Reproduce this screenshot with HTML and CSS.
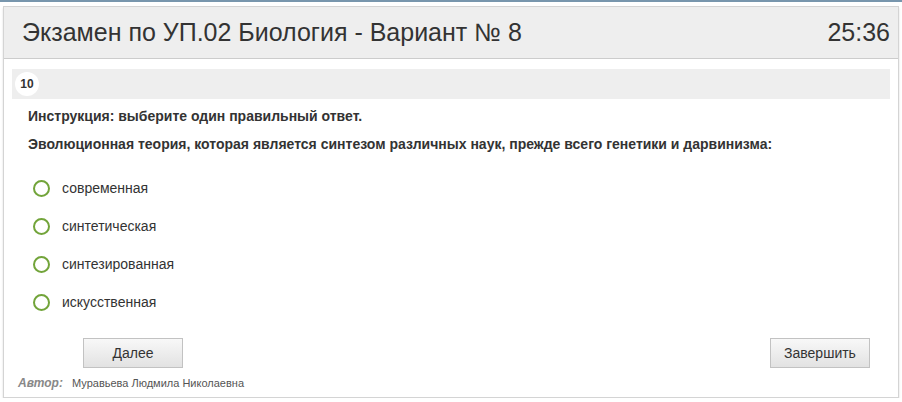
FILE: index.html
```html
<!DOCTYPE html>
<html lang="ru">
<head>
  <meta charset="UTF-8" />
  <title>Экзамен</title>
  <link rel="stylesheet" href="styles.css">
</head>
<body>
  <div class="panel">
    <div class="header">
      <h1>Экзамен по УП.02 Биология - Вариант № 8</h1>
      <span class="timer">25:36</span>
    </div>
    <div class="content">
      <div class="qbar"><span class="qnum">10</span></div>
      <p class="instr">Инструкция: выберите один правильный ответ.</p>
      <p class="instr">Эволюционная теория, которая является синтезом различных наук, прежде всего генетики и дарвинизма:</p>

      <ul class="options">
        <li><span class="radio"></span>современная</li>
        <li><span class="radio"></span>синтетическая</li>
        <li><span class="radio"></span>синтезированная</li>
        <li><span class="radio"></span>искусственная</li>
      </ul>

      <div class="buttons">
        <button class="btn">Далее</button>
        <button class="btn">Завершить</button>
      </div>
      <div class="author"><b>Автор:</b> Муравьева Людмила Николаевна</div>
    </div>
  </div>
</body>
</html>
```

FILE: styles.css
```css
body {
  margin: 0;
  border-top: 2px solid #7896ad;
  font-family: Arial, "Liberation Sans", sans-serif;
  color: #333;
  background: #fff;
}
.panel {
  margin: 4px 3px 0 3px;
  border: 1px solid #d4d4d4;
  box-shadow: 0 2px 2px #ddd;
  height: 392px;
  box-sizing: border-box;
}
.header {
  display: flex;
  justify-content: space-between;
  align-items: center;
  height: 51px;
  background: #eee;
  border-bottom: 1px solid #ccc;
  padding: 0 8px 0 18px;
}
.header h1 {
  margin: 0;
  font-size: 25px;
  font-weight: normal;
  color: #333;
}
.timer {
  font-size: 25px;
}
.content {
  padding: 10px 8px 0 8px;
}
.qbar {
  background: #eee;
  height: 30px;
  display: flex;
  align-items: center;
  padding-left: 3px;
}
.qnum {
  width: 24px;
  height: 24px;
  border-radius: 50%;
  background: #fff;
  font-size: 12px;
  font-weight: bold;
  display: flex;
  align-items: center;
  justify-content: center;
}
.instr {
  font-size: 14px;
  font-weight: bold;
  margin: 9px 0 0 16px;
  line-height: 16px;
}
.instr + .instr {
  margin-top: 12px;
}
.options {
  list-style: none;
  margin: 17px 0 0 0;
  padding: 0 0 0 21px;
}
.options li {
  display: flex;
  align-items: center;
  height: 38px;
  font-size: 14px;
}
.radio {
  width: 13px;
  height: 13px;
  border: 2px solid #72a43a;
  border-radius: 50%;
  margin-right: 12px;
}
.buttons {
  display: flex;
  justify-content: space-between;
  padding: 17px 20px 0 71px;
}
.btn {
  width: 100px;
  height: 30px;
  border: 1px solid #c2c2c2;
  background: linear-gradient(#f8f8f8, #e2e2e2);
  font-family: Arial, "Liberation Sans", sans-serif;
  font-size: 14px;
  color: #333;
}
.author {
  margin: 8px 0 0 6px;
  font-size: 11px;
  color: #555;
}
.author b {
  font-style: italic;
  color: #888;
  font-size: 12px;
  margin-right: 6px;
}
```
